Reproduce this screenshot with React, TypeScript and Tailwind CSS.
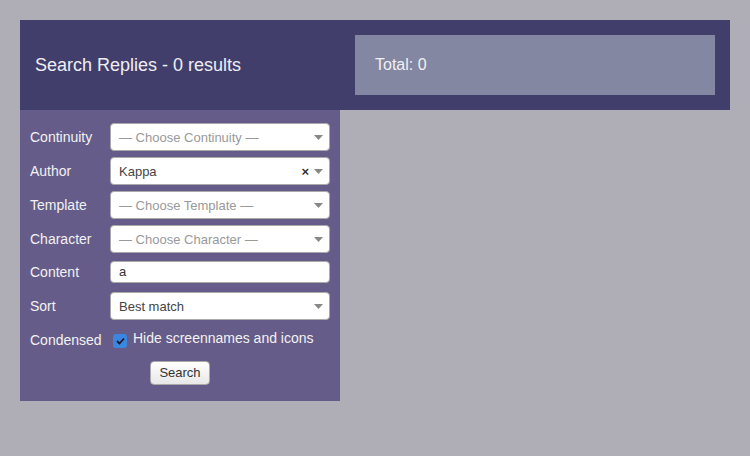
import React from "react";

const Caret = () => (
  <svg width="9" height="5" viewBox="0 0 9 5" className="shrink-0">
    <path d="M0 0 L9 0 L4.5 5 Z" fill="#888" />
  </svg>
);

function Select({ value, placeholder, clear }: { value?: string; placeholder?: string; clear?: boolean }) {
  return (
    <div className="flex h-[28px] w-[220px] items-center rounded-[4px] border border-[#aaa] bg-white pl-[8px] pr-[6px]">
      <span className={"flex-1 pt-[1px] text-[13px] " + (value ? "text-[#444]" : "text-[#999]")}>{value ?? placeholder}</span>
      {clear && <span className="mr-[5px] text-[13px] font-bold leading-none text-[#333]">×</span>}
      <Caret />
    </div>
  );
}

function Row({ label, children, className }: { label: string; children: React.ReactNode; className?: string }) {
  return (
    <div className={"flex items-center " + (className ?? "")}>
      <div className="w-[80px] text-[14px] text-[#f2f2f2]">{label}</div>
      {children}
    </div>
  );
}

export default function App() {
  return (
    <div className="min-h-[456px] w-[750px] bg-[#afadb5] p-[20px]" style={{ fontFamily: '"Liberation Sans", Arial, sans-serif' }}>
      <div className="flex h-[90px] w-[710px] items-center bg-[#413e6c]">
        <div className="w-[335px] pl-[15px] text-[18px] text-[#eeeef2]">Search Replies - 0 results</div>
        <div className="flex h-[60px] w-[360px] items-center bg-[#8387a1] pl-[20px] text-[16px] text-[#f0f0f4]">Total: 0</div>
      </div>
      <div className="w-[320px] bg-[#655c89] px-[10px] pt-[13px] pb-[16px]">
        <div className="flex flex-col gap-[6px]">
          <Row label="Continuity"><Select placeholder="— Choose Continuity —" /></Row>
          <Row label="Author"><Select value="Kappa" clear /></Row>
          <Row label="Template"><Select placeholder="— Choose Template —" /></Row>
          <Row label="Character"><Select placeholder="— Choose Character —" /></Row>
        </div>
        <Row label="Content" className="mt-[8px]">
          <div className="flex h-[22px] w-[220px] items-center rounded-[4px] border border-[#aaa] bg-white px-[8px] text-[13px] text-[#333]">a</div>
        </Row>
        <Row label="Sort" className="mt-[9px]"><Select value="Best match" /></Row>
        <Row label="Condensed" className="mt-[10px]">
          <div className="ml-[3px] mt-[1px] flex h-[14px] w-[14px] items-center justify-center rounded-[3px] bg-[#3b87e0]">
            <svg width="9" height="8" viewBox="0 0 9 8">
              <path d="M1 4 L3.5 6.5 L8 1.5" stroke="#1a1a2a" strokeWidth="1.8" fill="none" />
            </svg>
          </div>
          <span className="ml-[6px] -mt-[4px] text-[14px] text-[#f2f2f2]">Hide screennames and icons</span>
        </Row>
        <div className="mt-[10px] flex justify-center">
          <button className="h-[24px] w-[60px] rounded-[4px] border border-[#aaa] bg-gradient-to-b from-white to-[#e8e8e8] text-[13px] text-[#333]">Search</button>
        </div>
      </div>
    </div>
  );
}
